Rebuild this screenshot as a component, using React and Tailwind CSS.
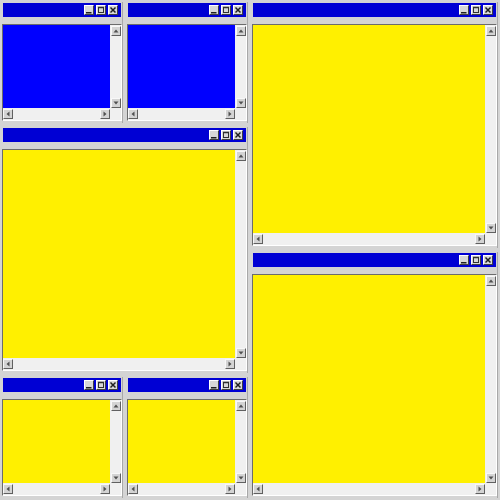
const gray = 'bg-[#d4d4d4]';

function TitleButton({ kind }) {
  return (
    <div className="w-[10px] h-[10px] bg-[#d8d8d8] border-t border-l border-[#ffffff] border-r-[#404040] border-b-[#404040] border-r border-b flex items-center justify-center">
      <svg width="8" height="8" viewBox="0 0 8 8">
        {kind === 'min' && <rect x="1" y="6" width="5.5" height="1.5" fill="#202020" />}
        {kind === 'max' && (
          <g fill="none" stroke="#303030">
            <rect x="1.5" y="1.5" width="5" height="5" strokeWidth="1" />
            <line x1="1" y1="1.5" x2="7" y2="1.5" strokeWidth="1.5" />
          </g>
        )}
        {kind === 'close' && (
          <g stroke="#202020" strokeWidth="1.5">
            <line x1="1.5" y1="1.5" x2="6.5" y2="6.5" />
            <line x1="6.5" y1="1.5" x2="1.5" y2="6.5" />
          </g>
        )}
      </svg>
    </div>
  );
}

function ArrowButton({ dir }) {
  const pts = {
    up: '1.5,5.5 6.5,5.5 4,2.5',
    down: '1.5,2.5 6.5,2.5 4,5.5',
    left: '5.5,1.5 5.5,6.5 2.5,4',
    right: '2.5,1.5 2.5,6.5 5.5,4',
  }[dir];
  return (
    <div className="w-[10px] h-[10px] shrink-0 bg-[#d4d4d4] border-t border-l border-[#f8f8f8] border-r-[#606060] border-b-[#606060] border-r border-b flex items-center justify-center">
      <svg width="8" height="8" viewBox="0 0 8 8">
        <polygon points={pts} fill="#505050" />
      </svg>
    </div>
  );
}

function Window({ fill }) {
  return (
    <div className={`flex flex-col h-full w-full ${gray} border-r border-[#a8a8a8]`}>
      <div className="mt-[1px] mx-[1px] h-[14px] shrink-0 bg-[#0000d4] flex items-center justify-end gap-[2px] pr-[3px]">
        <TitleButton kind="min" />
        <TitleButton kind="max" />
        <TitleButton kind="close" />
      </div>
      <div className="h-[7px] shrink-0" />
      <div className="flex-1 min-h-0 flex flex-col border-t border-l border-[#6c6c6c] border-r-[#ffffff] border-b-[#ffffff] border-r border-b mb-[2px]">
        <div className="flex-1 min-h-0 flex">
          <div className={`flex-1 ${fill}`} />
          <div className="w-[11px] bg-[#f0f0f0] flex flex-col justify-between items-end pt-[1px]">
            <ArrowButton dir="up" />
            <ArrowButton dir="down" />
          </div>
        </div>
        <div className="h-[12px] shrink-0 flex">
          <div className="flex-1 bg-[#f0f0f0] flex justify-between pt-[1px]">
            <ArrowButton dir="left" />
            <ArrowButton dir="right" />
          </div>
          <div className="w-[11px] bg-[#f0f0f0]" />
        </div>
      </div>
    </div>
  );
}

function Cell({ className, fill }) {
  return (
    <div className={`p-[2px] ${className}`}>
      <Window fill={fill} />
    </div>
  );
}

export default function App() {
  const blue = 'bg-[#0000ff]';
  const yellow = 'bg-[#fff000]';
  return (
    <div className={`w-[500px] h-[500px] flex ${gray}`}>
      <div className="w-[250px] h-full flex flex-col">
        <div className="h-[125px] flex">
          <Cell className="w-[125px] h-full" fill={blue} />
          <Cell className="w-[125px] h-full" fill={blue} />
        </div>
        <Cell className="h-[250px] w-full" fill={yellow} />
        <div className="h-[125px] flex">
          <Cell className="w-[125px] h-full" fill={yellow} />
          <Cell className="w-[125px] h-full" fill={yellow} />
        </div>
      </div>
      <div className="w-[250px] h-full flex flex-col">
        <Cell className="h-[250px] w-full" fill={yellow} />
        <Cell className="h-[250px] w-full" fill={yellow} />
      </div>
    </div>
  );
}
